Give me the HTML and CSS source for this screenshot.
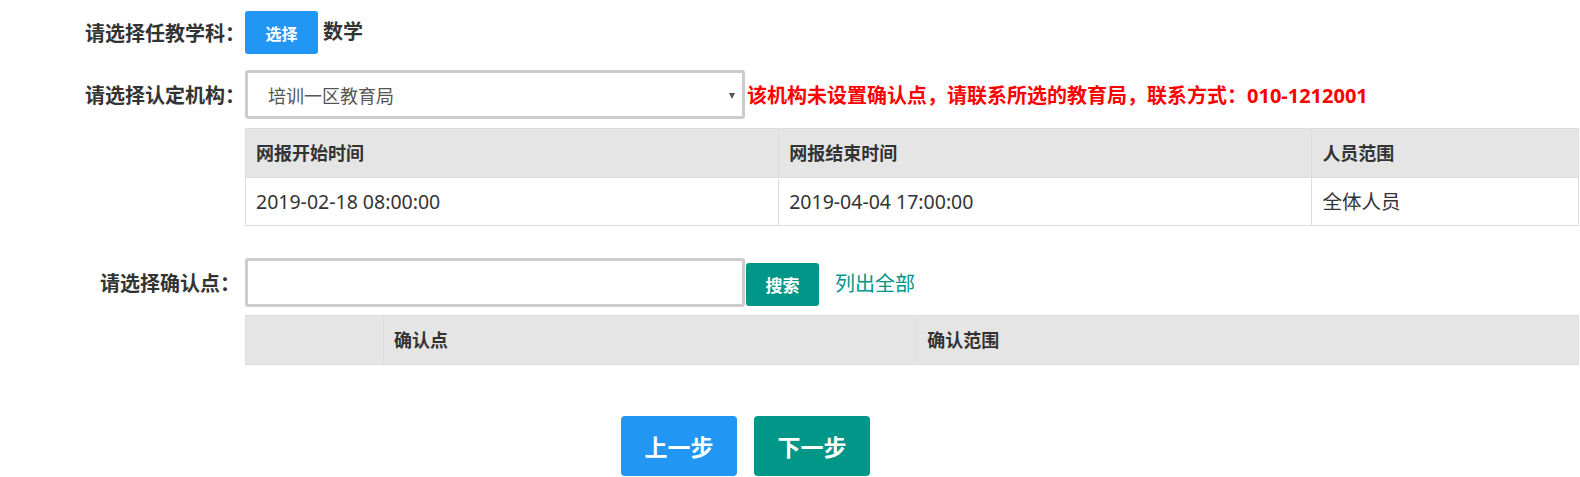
FILE: index.html
```html
<!DOCTYPE html>
<html lang="zh-CN">
<head>
    <meta charset="UTF-8">
    <meta name="viewport" content="width=device-width, initial-scale=1.0">
    <title>选择确认点</title>
    <link rel="stylesheet" href="styles.css">
</head>
<body>
    <div class="form">
        <div class="form-row row-subject">
            <label class="form-label">请选择任教学科：</label>
            <div class="form-field">
                <button class="btn btn-blue btn-small">选择</button>
                <span class="subject">数学</span>
            </div>
        </div>

        <div class="form-row row-org">
            <label class="form-label">请选择认定机构：</label>
            <div class="form-field">
                <div class="select-wrap">
                    <select class="select">
                        <option>培训一区教育局</option>
                    </select>
                </div>
                <span class="warn">该机构未设置确认点，请联系所选的教育局，联系方式：010-1212001</span>
            </div>
        </div>

        <div class="form-row">
            <div class="form-label"></div>
            <table class="grid grid-time">
                <tr>
                    <th class="w40">网报开始时间</th>
                    <th class="w40">网报结束时间</th>
                    <th>人员范围</th>
                </tr>
                <tr>
                    <td>2019-02-18 08:00:00</td>
                    <td>2019-04-04 17:00:00</td>
                    <td>全体人员</td>
                </tr>
            </table>
        </div>

        <div class="form-row row-search">
            <label class="form-label label-narrow">请选择确认点：</label>
            <div class="form-field">
                <input class="input" type="text">
                <button class="btn btn-teal btn-small">搜索</button>
                <a class="link" href="#">列出全部</a>
            </div>
        </div>

        <div class="form-row row-points">
            <div class="form-label"></div>
            <table class="grid">
                <tr>
                    <th class="w-index"></th>
                    <th class="w40">确认点</th>
                    <th>确认范围</th>
                </tr>
            </table>
        </div>

        <div class="actions">
            <button class="btn btn-blue btn-big">上一步</button>
            <button class="btn btn-teal btn-big">下一步</button>
        </div>
    </div>
</body>
</html>
```

FILE: styles.css
```css
body {
    margin: 0;
    font-family: "Noto Sans", "Noto Sans CJK SC", sans-serif;
    color: #333;
    background: #fff;
}
.form {
    padding-top: 11px;
}
.form-row {
    display: flex;
    align-items: center;
}
.form-label {
    width: 245px;
    flex: none;
    text-align: right;
    font-size: 20px;
    font-weight: bold;
    color: #333;
}
.label-narrow {
    width: 240px;
    margin-right: 5px;
}
.form-field {
    display: flex;
    align-items: center;
}
.row-org {
    margin-top: 16px;
}
.grid-time {
    margin-top: 9px;
}
.row-search {
    margin-top: 32px;
}
.row-points {
    margin-top: 8px;
}

.btn {
    border: none;
    border-radius: 3px;
    color: #fff;
    font-family: "Noto Sans CJK SC", sans-serif;
    font-weight: bold;
    cursor: pointer;
    padding: 0;
}
.btn-blue {
    background-color: #2196f3;
}
.btn-teal {
    background-color: #009688;
}
.btn-small {
    width: 73px;
    height: 43px;
    font-size: 16px;
}
.btn-big {
    width: 116px;
    height: 60px;
    font-size: 23px;
    border-radius: 4px;
}
.subject {
    margin-left: 5px;
    margin-top: -4px;
    font-size: 20px;
    font-weight: bold;
}

.select-wrap {
    position: relative;
}
.select-wrap::after {
    content: "";
    position: absolute;
    right: 10px;
    top: 23px;
    border-left: 3px solid transparent;
    border-right: 3px solid transparent;
    border-top: 6px solid #555;
}
.select {
    -webkit-appearance: none;
    appearance: none;
    box-sizing: border-box;
    width: 500px;
    height: 49px;
    border: 3px solid #ccc;
    border-radius: 3px;
    padding: 0 20px;
    background: #fff;
    font-family: "Noto Sans CJK SC", sans-serif;
    font-size: 18px;
    color: #555;
    outline: none;
}
.warn {
    margin-left: 2px;
    font-size: 20px;
    font-weight: bold;
    color: #ff0000;
}

.input {
    box-sizing: border-box;
    width: 500px;
    height: 49px;
    border: 3px solid #ccc;
    border-radius: 3px;
    margin: 0;
    padding: 0 10px;
    outline: none;
}
.row-search .btn {
    margin-left: 1px;
    margin-top: 4px;
    font-size: 17px;
}
.link {
    margin-left: 16px;
    font-size: 20px;
    color: #009688;
    text-decoration: none;
}

.grid {
    flex: 1;
    table-layout: fixed;
    border-collapse: collapse;
    margin-right: 1px;
}
.grid th,
.grid td {
    border: 1px solid #ddd;
    text-align: left;
    font-size: 18px;
    padding: 11px 10px;
    line-height: 26px;
}
.grid th {
    background-color: #e5e5e5;
    font-weight: bold;
}
.grid td {
    padding: 10px 10px;
    line-height: 27px;
    font-size: 19.5px;
    font-weight: normal;
}
.w-index {
    width: 117px;
}
.w40 {
    width: 40%;
}

.actions {
    display: flex;
    gap: 17px;
    margin-top: 51px;
    padding-left: 621px;
}
```
